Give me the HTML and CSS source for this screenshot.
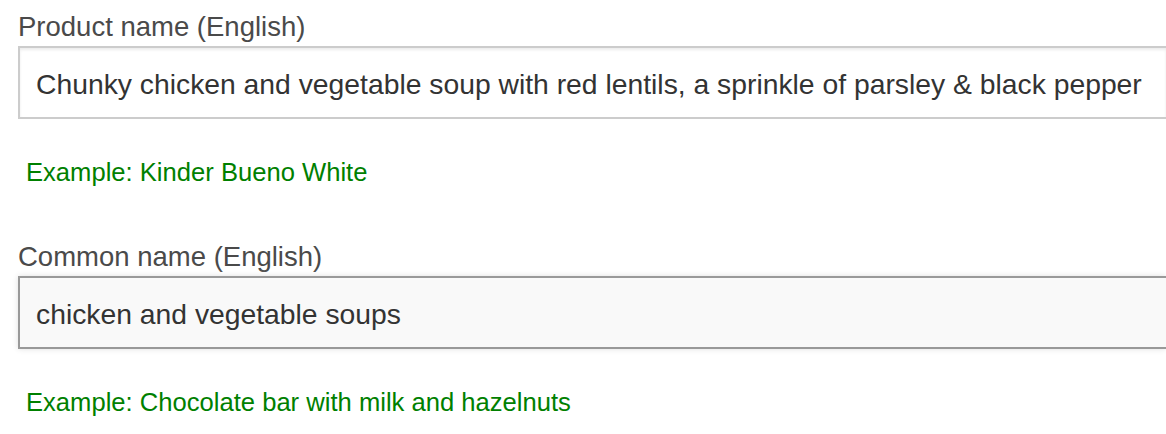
FILE: index.html
```html
<!DOCTYPE html>
<html>
<head>
<meta charset="utf-8">
<link rel="stylesheet" href="styles.css">
</head>
<body>
<form class="form">
  <div class="field">
    <label class="label" for="pn">Product name (English)</label>
    <input class="input" id="pn" type="text" value="Chunky chicken and vegetable soup with red lentils, a sprinkle of parsley &amp; black pepper">
    <p class="note">Example: Kinder Bueno White</p>
  </div>
  <div class="field">
    <label class="label" for="cn">Common name (English)</label>
    <input class="input input-focus" id="cn" type="text" value="chicken and vegetable soups">
    <p class="note">Example: Chocolate bar with milk and hazelnuts</p>
  </div>
</form>
</body>
</html>
```
FILE: styles.css
```css
html, body {
  margin: 0;
  padding: 0;
  background: #fff;
  overflow: hidden;
}
body {
  font-family: "Liberation Sans", Arial, sans-serif;
  width: 1166px;
  height: 434px;
}
.form {
  padding: 9px 0 0 18px;
  overflow: hidden;
}
.field {
  display: flex;
  flex-direction: column;
  align-items: flex-start;
}
.label {
  font-size: 27.5px;
  line-height: 36px;
  color: #4a4a4a;
  margin: 0 0 1px;
}
.input {
  box-sizing: border-box;
  width: 1148px;
  height: 73px;
  margin: 0;
  padding: 4px 16px 0;
  border: 2px solid #cccccc;
  border-right: 0;
  border-radius: 0;
  background: #fff;
  box-shadow: inset 0 2px 3px rgba(0,0,0,0.08);
  font-family: "Liberation Sans", Arial, sans-serif;
  font-size: 28.3px;
  color: #333;
  outline: none;
}
.input-focus {
  background: #f9f9f9;
  border-color: #999999;
  box-shadow: 0 0 6px #e0e0e0;
}
.note {
  margin: 0 0 52px;
  padding: 38px 0 0 8px;
  font-size: 25.6px;
  line-height: 30px;
  color: #008000;
}
.field:last-child .note {
  margin-bottom: 0;
}
```
